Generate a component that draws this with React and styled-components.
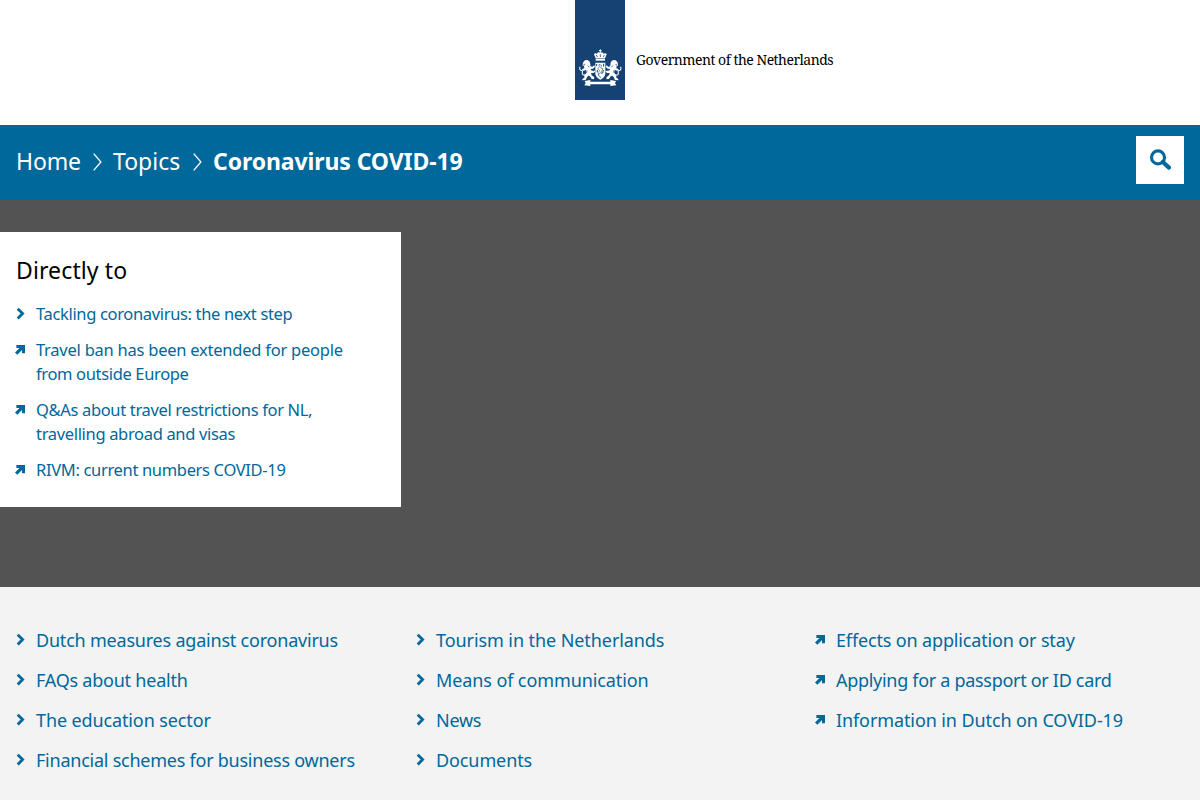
import React from 'react';
import styled, { createGlobalStyle } from 'styled-components';

const BLUE = '#00689a';
const NAVY = '#154273';

const GlobalStyle = createGlobalStyle`
  * { box-sizing: border-box; }
  body { margin: 0; overflow: hidden; background: #fff; font-family: "Noto Sans", "Open Sans", sans-serif; }
  h2, p, ul, ol { margin: 0; padding: 0; list-style: none; font-weight: 400; }
  a { color: inherit; text-decoration: none; }
`;

const Page = styled.div`
  display: flex;
  flex-direction: column;
  height: 800px;
`;

const Header = styled.header`
  display: grid;
  grid-template-columns: 575px 50px 1fr;
  height: 125px;
`;

const Ribbon = styled.div`
  grid-column: 2;
  display: flex;
  align-items: flex-end;
  height: 100px;
  background: ${NAVY};
`;

const Wordmark = styled.p`
  padding: 50px 0 0 11px;
  font: 14px/20px "Noto Serif", "DejaVu Serif Condensed", serif;
  letter-spacing: -0.5px;
  color: #000;
`;

const Bar = styled.nav`
  display: flex;
  justify-content: space-between;
  align-items: flex-start;
  height: 75px;
  padding: 11px 16px 0;
  background: ${BLUE};
`;

const Crumbs = styled.ol`
  display: flex;
  padding-top: 9px;
  color: #fff;
  font-size: 23px;
  line-height: 32px;
`;

const Crumb = styled.li`
  display: flex;
  width: ${(p) => p.$width};
  font-weight: ${(p) => (p.$current ? 700 : 400)};
  letter-spacing: ${(p) => p.$track || 0}px;
  white-space: nowrap;
  justify-content: space-between;

  svg { margin: 8px 11px 0 0; }
`;

const SearchButton = styled.button`
  width: 48px;
  height: 48px;
  padding: 0;
  border: 0;
  background: #fff;

  svg { display: block; }
`;

const Hero = styled.section`
  height: 387px;
  padding-top: 32px;
  background: #535353;
`;

const Card = styled.div`
  width: 401px;
  height: 275px;
  padding: 22px 16px 0;
  background: #fff;
`;

const CardTitle = styled.h2`
  margin-bottom: 16px;
  font-size: 23px;
  line-height: 32px;
  letter-spacing: 0.12px;
  color: #000;
`;

const CardList = styled.ul`
  display: flex;
  flex-direction: column;
  gap: 12px;
  font-size: 16.5px;
  line-height: 24px;
`;

const Columns = styled.section`
  flex: 1;
  display: grid;
  grid-template-columns: repeat(3, 400px);
  align-items: start;
  padding-top: 33px;
  background: #f3f3f3;
`;

const Column = styled.ul`
  padding-left: 16px;
  font-size: 18px;
  line-height: 40px;
`;

const Item = styled.li`
  display: flex;
  color: ${BLUE};
`;

const Marker = styled.span`
  flex: none;
  width: 20px;
  height: 24px;
  margin-top: ${(p) => (p.$tall ? '8px' : '0')};

  svg { display: block; overflow: visible; }
`;

const Line = styled.span`
  display: block;
  white-space: nowrap;
  letter-spacing: ${(p) => p.$track}px;
`;

function Chevron() {
  return (
    <svg width="10" height="24" viewBox="0 0 10 24">
      <path d="M1.7 6.8 6.6 11.6 1.7 16.4" fill="none" stroke={BLUE} strokeWidth="2.8" />
    </svg>
  );
}

function ArrowOut() {
  return (
    <svg width="10" height="24" viewBox="0 0 10 24">
      <path d="M0.4 7H9V15.2H6V12.1L1.3 16.8L-1 14.5L3.5 10H0.4Z" fill={BLUE} />
    </svg>
  );
}

function Separator() {
  return (
    <svg width="9" height="18" viewBox="0 0 9 18">
      <path d="M0.7 0.6 7.9 9 0.7 17.4" fill="none" stroke="#fff" strokeWidth="1.3" />
    </svg>
  );
}

function SearchIcon() {
  return (
    <svg width="48" height="48" viewBox="0 0 48 48" fill="none" stroke={BLUE}>
      <circle cx="22" cy="21.4" r="6.5" strokeWidth="3.1" />
      <path d="M26.8 26 33 31.6" strokeWidth="4.2" strokeLinecap="round" />
    </svg>
  );
}

const Supporter = () => (
  <g fill="#fff">
    <path d="M38 72 40 66 45 61 53 60 59 65 61 72 61 79 67 80 73 76 75 80 69 86 62 87 63 91 72 93 75 91 75 96 70 99 63 99 65 106 73 112 72 118 65 117 60 109 55 107 51 112 47 120 36 121 38 116 43 113 43 106 49 99 48 90 41 92 36 91 37 87 43 85 42 79 45 77 38 77Z" />
    <path d="M46 105Q35 106 37 98 40 92 32 91 27 87 30 80" fill="none" stroke="#fff" strokeWidth="3.2" />
    <path d="M40 73H46M51 91 50 99M53 76 58 82" fill="none" stroke={NAVY} strokeWidth="2" />
  </g>
);

function CoatOfArms() {
  return (
    <svg width="50" height="55" viewBox="15 15 150 165">
      <Supporter />
      <g transform="matrix(-1 0 0 1 182 0)"><Supporter /></g>
      <path d="M76 68H106V101Q105 112 91 119 77 112 76 101Z" fill="#fff" />
      <path d="M80 72V78M101 71V80M82 90V97M100 90 98 99M91 110V113M85 106 89 109" fill="none" stroke={NAVY} strokeWidth="3" />
      <path d="M87 73 95 76 92 84 99 86 94 94 97 101 90 98 85 105 85 97 89 91 83 86 88 82Z" fill="#fff" stroke={NAVY} strokeWidth="1.6" />
      <path d="M77 55 72 43Q74 37 81 41 85 34 91 39 97 34 101 41 108 37 110 43L105 55Z" fill="#fff" />
      <path d="M82 51 79 45M91 51V43M100 51 103 45" stroke={NAVY} strokeWidth="2.5" />
      <path d="M77 56H105V62H77Z" fill="#fff" />
      <path d="M91 28V39M87 32H95" stroke="#fff" strokeWidth="3" />
      <path d="M44 123 61 120V125H121V120L138 123 135 129 139 136 121 138V133H61V138L43 136 47 129Z" fill="#fff" />
    </svg>
  );
}

const directLinks = [
  { lines: [['Tackling coronavirus: the next step', -0.34]] },
  { out: true, lines: [['Travel ban has been extended for people', -0.24], ['from outside Europe', -0.35]] },
  { out: true, lines: [['Q&As about travel restrictions for NL,', -0.34], ['travelling abroad and visas', -0.33]] },
  { out: true, lines: [['RIVM: current numbers COVID-19', -0.33]] },
];

const columns = [
  [
    { lines: [['Dutch measures against coronavirus', -0.21]] },
    { lines: [['FAQs about health', -0.23]] },
    { lines: [['The education sector', -0.12]] },
    { lines: [['Financial schemes for business owners', -0.24]] },
  ],
  [
    { lines: [['Tourism in the Netherlands', -0.08]] },
    { lines: [['Means of communication', -0.1]] },
    { lines: [['News', -0.25]] },
    { lines: [['Documents', -0.1]] },
  ],
  [
    { out: true, lines: [['Effects on application or stay', -0.15]] },
    { out: true, lines: [['Applying for a passport or ID card', -0.3]] },
    { out: true, lines: [['Information in Dutch on COVID-19', -0.1]] },
  ],
];

function LinkItem({ link, tall }) {
  return (
    <Item>
      <Marker $tall={tall}>{link.out ? <ArrowOut /> : <Chevron />}</Marker>
      <a href="#">
        {link.lines.map(([text, track]) => (
          <Line key={text} $track={track}>{text}</Line>
        ))}
      </a>
    </Item>
  );
}

export default function App() {
  return (
    <Page>
      <GlobalStyle />
      <Header>
        <Ribbon><CoatOfArms /></Ribbon>
        <Wordmark>Government of the Netherlands</Wordmark>
      </Header>
      <Bar>
        <Crumbs>
          <Crumb $width="97px" $track={-0.15}><a href="#">Home</a><Separator /></Crumb>
          <Crumb $width="100px"><a href="#">Topics</a><Separator /></Crumb>
          <Crumb $current $track={-0.1}>Coronavirus COVID-19</Crumb>
        </Crumbs>
        <SearchButton aria-label="Search"><SearchIcon /></SearchButton>
      </Bar>
      <Hero>
        <Card>
          <CardTitle>Directly to</CardTitle>
          <CardList>
            {directLinks.map((link) => <LinkItem key={link.lines[0][0]} link={link} />)}
          </CardList>
        </Card>
      </Hero>
      <Columns>
        {columns.map((links, i) => (
          <Column key={i}>
            {links.map((link) => <LinkItem key={link.lines[0][0]} link={link} tall />)}
          </Column>
        ))}
      </Columns>
    </Page>
  );
}
